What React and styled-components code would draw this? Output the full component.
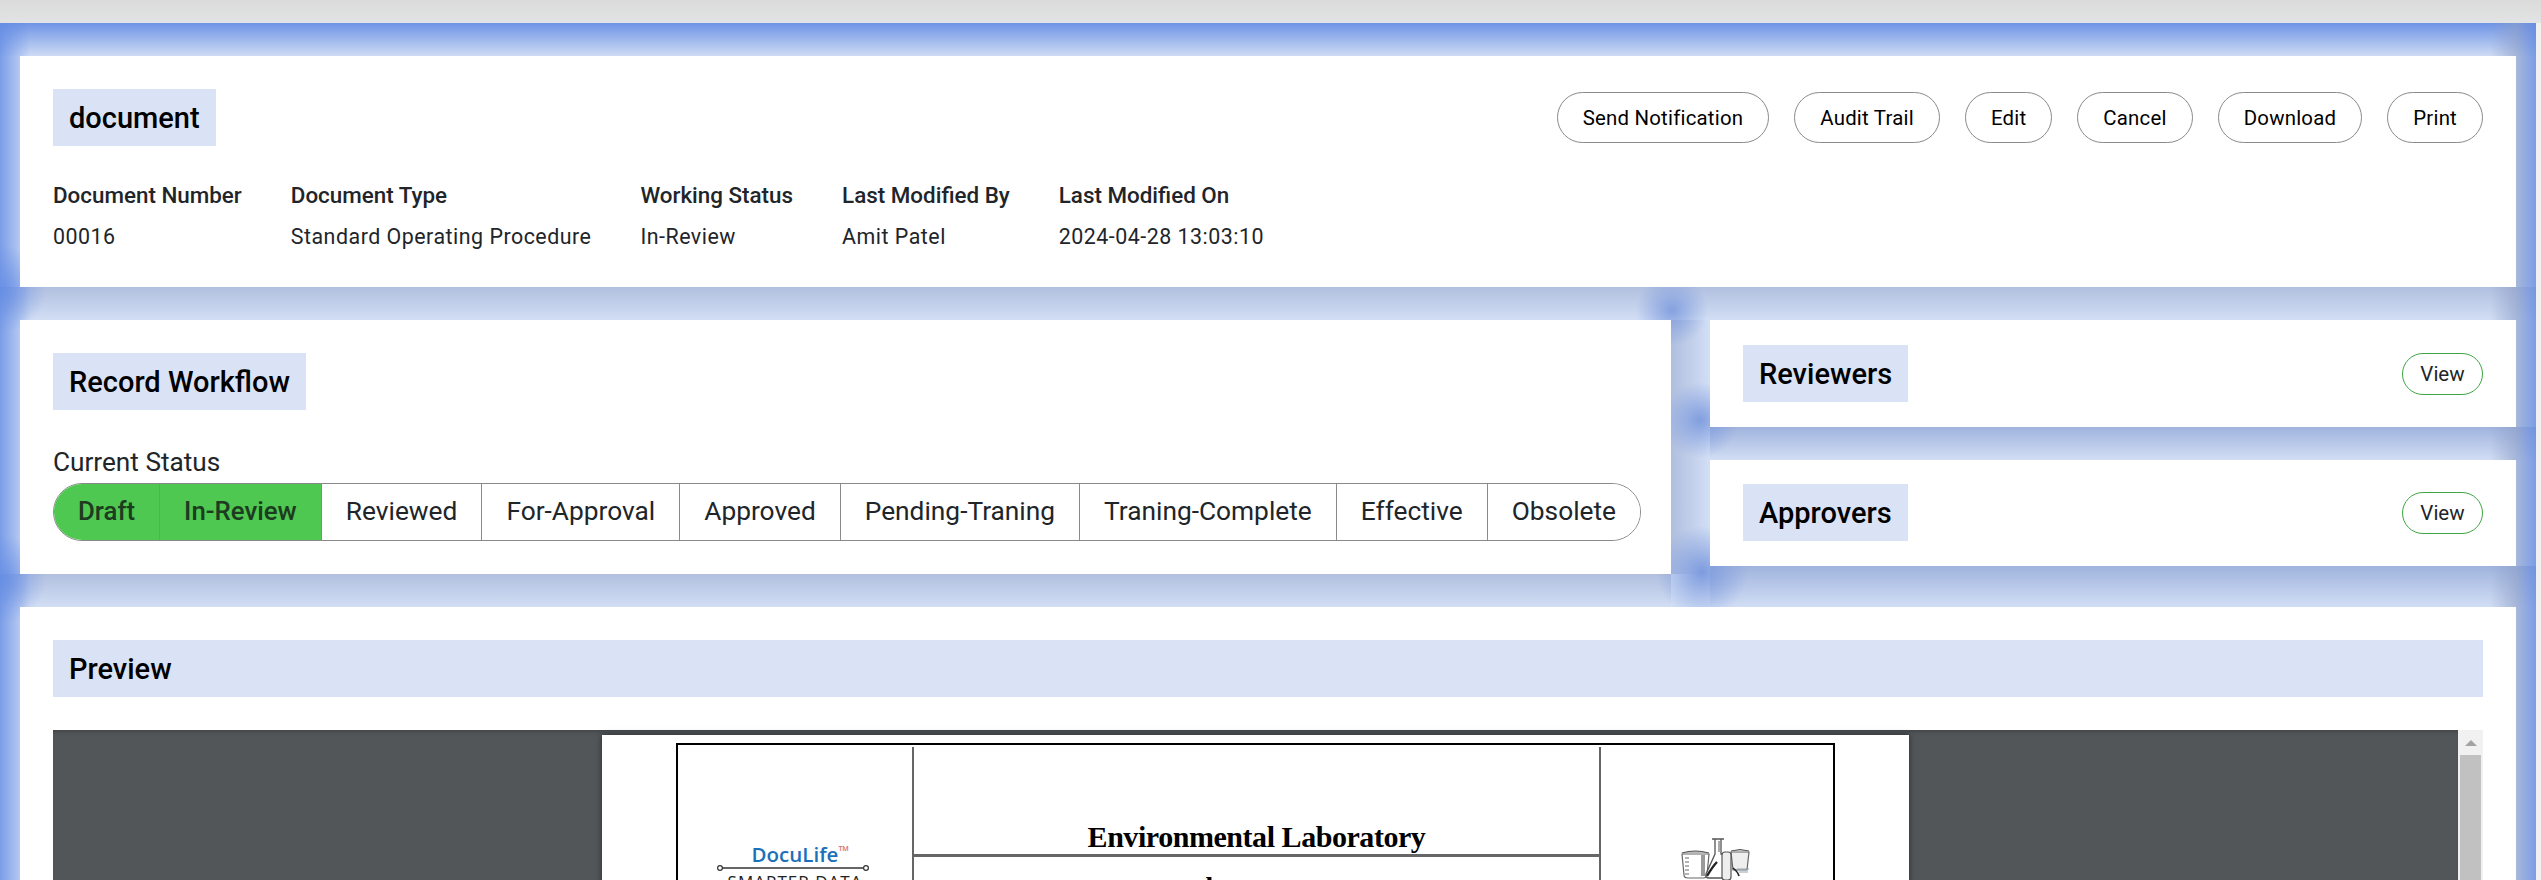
import React from 'react';
import styled, { createGlobalStyle } from 'styled-components';

const Global = createGlobalStyle`
  html, body { margin: 0; padding: 0; height: 880px; overflow: hidden; background: #f1f1f1; }
  #root { height: 880px; overflow: hidden; }
  * { box-sizing: border-box; }
`;

const Shell = styled.div`
  height: 880px;
  display: flex;
  flex-direction: column;
  overflow: hidden;
  font-family: Roboto, "Liberation Sans", sans-serif;
  color: #212529;
`;
const TopStrip = styled.div`
  height: 23px;
  flex: none;
  background: linear-gradient(180deg, #dbdbdb, #e2e3e4);
`;
const Body = styled.div`
  flex: 1;
  min-height: 0;
  display: flex;
`;
const Gutter = styled.div`
  width: 5px;
  flex: none;
  background: #f1f1f1;
`;
const Main = styled.main`
  flex: 1;
  min-width: 0;
  padding: 33px 20px 0;
  display: flex;
  flex-direction: column;
  gap: 33px;
  overflow: hidden;
  background-color: #d3dff5;
  background-repeat: no-repeat;
  background-image:
    radial-gradient(circle 36px at 1672px 287px, rgba(125, 155, 222, 0.9), rgba(125, 155, 222, 0)),
    radial-gradient(circle 38px at 1700px 397px, rgba(125, 155, 222, 0.95), rgba(125, 155, 222, 0)),
    radial-gradient(circle 46px at 1702px 549px, rgba(125, 155, 222, 1), rgba(125, 155, 222, 0)),
    radial-gradient(circle 44px at 2px 266px, rgba(100, 140, 228, 0.75), rgba(100, 140, 228, 0)),
    radial-gradient(circle 44px at 2px 556px, rgba(100, 140, 228, 0.75), rgba(100, 140, 228, 0)),
    linear-gradient(90deg, rgba(100, 140, 228, 0.8), rgba(100, 140, 228, 0) 30px),
    linear-gradient(90deg, rgba(140, 158, 200, 0), rgba(140, 158, 200, 0.6) 26px, rgba(100, 140, 228, 0.8) 46px),
    linear-gradient(180deg, rgba(140, 158, 200, 0.48), rgba(140, 158, 200, 0.02)),
    linear-gradient(180deg, rgba(140, 158, 200, 0.48), rgba(140, 158, 200, 0.02)),
    linear-gradient(180deg, rgba(125, 150, 205, 0.6), rgba(125, 150, 205, 0.02)),
    linear-gradient(180deg, rgba(125, 150, 205, 0.6), rgba(125, 150, 205, 0.02)),
    linear-gradient(90deg, rgba(140, 158, 200, 0.5), rgba(140, 158, 200, 0)),
    linear-gradient(180deg, rgba(100, 140, 228, 0.9), rgba(100, 140, 228, 0.05));
  background-size:
    auto, auto, auto, auto, auto,
    40px 100%,
    46px 100%,
    100% 33px,
    1671px 33px,
    826px 33px,
    826px 41px,
    39px 254px,
    100% 33px;
  background-position:
    0 0, 0 0, 0 0, 0 0, 0 0,
    0 0,
    2490px 0,
    0 264px,
    0 551px,
    1710px 404px,
    1710px 543px,
    1671px 297px,
    0 0;
`;
const Card = styled.section`
  background: #fff;
  flex: none;
  padding: ${p => p.$pad || '33px'};
`;
const HeaderRow = styled.div`
  display: flex;
  align-items: center;
  justify-content: space-between;
`;
const Chip = styled.h2`
  margin: 0;
  height: 57px;
  padding: 2px 16px 0;
  display: ${p => (p.$wide ? 'flex' : 'inline-flex')};
  align-items: center;
  background: #dae3f5;
  color: #000;
  font-size: 29px;
  font-weight: 500;
  line-height: 1;
`;
const Actions = styled.div`
  display: flex;
  gap: 25px;
`;
const PillButton = styled.button`
  height: 51px;
  padding: 0 25px;
  border: 1px solid #8a8a8a;
  border-radius: 26px;
  background: #fff;
  color: #000;
  font-family: inherit;
  font-size: 20.4px;
  letter-spacing: 0.22px;
`;
const Meta = styled.div`
  display: flex;
  gap: 49px;
  margin-top: 37px;
`;
const MetaCol = styled.div`
  display: flex;
  flex-direction: column;
  gap: 18px;
`;
const MetaLabel = styled.div`
  font-size: 22.4px;
  font-weight: 500;
  line-height: 24px;
`;
const MetaValue = styled.div`
  font-size: 21.4px;
  line-height: 24px;
  letter-spacing: 0.5px;
`;
const Split = styled.div`
  display: grid;
  grid-template-columns: 1651px 806px;
  gap: 39px;
  flex: none;
`;
const Stack = styled.div`
  display: flex;
  flex-direction: column;
  gap: 33px;
`;
const StatusLabel = styled.div`
  margin: 34px 0 3px;
  font-size: 26.2px;
  line-height: 36px;
`;
const StatusBar = styled.div`
  display: flex;
  width: max-content;
  height: 58px;
  border: 1.5px solid #8a8a8a;
  border-radius: 29px;
  overflow: hidden;
`;
const Step = styled.div`
  display: flex;
  align-items: center;
  padding: 0 24px 2px;
  font-size: ${p => (p.$active ? '25.8px' : '26.3px')};
  font-weight: ${p => (p.$active ? 500 : 400)};
  background: ${p => (p.$active ? '#4ec850' : '#fff')};
  color: ${p => (p.$active ? '#1d3b20' : '#212529')};
  & + & { border-left: 1px solid #8a8a8a; }
`;
const SideHeader = styled.div`
  display: flex;
  align-items: center;
  justify-content: space-between;
`;
const ViewButton = styled.button`
  height: 42px;
  width: 81px;
  border: 1px solid #3fa544;
  border-radius: 21px;
  background: #fff;
  color: #212529;
  font-family: inherit;
  font-size: 20.5px;
  padding: 0;
`;
const Viewer = styled.div`
  display: flex;
  margin-top: 33px;
  height: 800px;
  background: #525659;
`;
const PdfCanvas = styled.div`
  flex: 1;
  min-width: 0;
  padding: 5px 0 0 549px;
  box-shadow: inset 0 4px 4px -3px rgba(0, 0, 0, 0.25);
`;
const PdfPage = styled.div`
  width: 1307px;
  height: 1800px;
  padding: 8px 74px 0;
  background: #fff;
  box-shadow: 0 0 6px rgba(0, 0, 0, 0.5);
`;
const DocTable = styled.div`
  display: grid;
  grid-template-columns: 234px 689px 236px;
  border: 2px solid #000;
  padding-top: 2px;
  height: 500px;
  color: #000;
`;
const LogoCell = styled.div`
  padding-top: 98px;
  display: flex;
  flex-direction: column;
  align-items: center;
`;
const LogoName = styled.div`
  font-family: "Open Sans", sans-serif;
  font-size: 20.5px;
  font-weight: 600;
  line-height: 19px;
  color: #1a70b9;
  position: relative;
  & sup {
    position: absolute;
    top: 0;
    left: 100%;
    font-size: 7px;
    line-height: 1;
    color: #d96a6a;
  }
`;
const LogoRule = styled.svg`
  display: block;
  margin: -1px 0 0 -4px;
`;
const LogoTag = styled.div`
  margin-top: 0;
  font-family: "Open Sans", sans-serif;
  font-size: 17px;
  line-height: 18px;
  letter-spacing: 1px;
  color: #222;
  white-space: nowrap;
`;
const CenterCell = styled.div`
  border-left: 2px solid #666;
  border-right: 2px solid #666;
`;
const DocHeading = styled.div`
  height: 110px;
  display: flex;
  align-items: flex-end;
  justify-content: center;
  padding-bottom: 2px;
  border-bottom: 3px solid #666;
  font-family: "Liberation Serif", serif;
  font-size: 30px;
  font-weight: 700;
  line-height: 30px;
  letter-spacing: -0.45px;
`;
const DocTitle = styled.div`
  padding-top: 14px;
  text-align: center;
  font-family: "Liberation Serif", serif;
  font-size: 28px;
  font-weight: 700;
  line-height: 32px;
`;
const LabCell = styled.div`
  padding: 91px 0 0 0;
  display: flex;
  justify-content: center;
`;
const ScrollTrack = styled.div`
  width: 25px;
  flex: none;
  padding: 0 2px;
  display: flex;
  flex-direction: column;
  align-items: center;
  background: #f1f1f1;
`;
const ScrollArrow = styled.div`
  margin-top: 10px;
  width: 0;
  height: 0;
  border-left: 6px solid transparent;
  border-right: 6px solid transparent;
  border-bottom: 6px solid #a3a3a3;
`;
const ScrollThumb = styled.div`
  margin-top: 9px;
  width: 21px;
  flex: 1;
  background: #c1c1c1;
`;

const LabIcon = () => (
  <svg width="80" height="46" viewBox="0 0 80 46" style={{ filter: 'blur(0.4px)' }}>
    <path d="M3 16 L5 37 Q5 40 9 40 L24 40 Q28 40 28 37 L30 16 Z" fill="#fff" stroke="#666" strokeWidth="1.2" />
    <path d="M3 15 Q16 11 30 15" fill="#bbb" stroke="#555" strokeWidth="1.2" />
    <path d="M6 20 h4 M6 24 h4 M6 28 h4 M6 32 h4 M6 36 h4" stroke="#555" strokeWidth="0.9" />
    <path d="M24 17 V38" stroke="#999" strokeWidth="4" />
    <path d="M52 14 L54 32 L68 32 L70 14 Z" fill="#eee" stroke="#666" strokeWidth="1.2" />
    <path d="M52 13 Q61 10 70 13" fill="#ccc" stroke="#555" strokeWidth="1" />
    <path d="M33 1 H45 M36 1 V16 L27 36 Q26 40 30 40 H50 V16 L42 16 V1" fill="#fff" stroke="#555" strokeWidth="1.3" />
    <path d="M40 3 V14" stroke="#aaa" strokeWidth="2" />
    <path d="M28 38 Q34 28 38 24" fill="none" stroke="#222" strokeWidth="2.4" />
    <rect x="43" y="14" width="9" height="28" rx="3" fill="#eee" stroke="#555" strokeWidth="1.2" />
    <path d="M54 30 Q59 34 60 38" fill="none" stroke="#222" strokeWidth="1.6" />
    <path d="M58 31 h12 M60 34 h9" stroke="#8fa3b5" strokeWidth="1.2" />
    <path d="M2 45 h4 M10 44 h6 M20 45 h8 M36 44 h5 M46 45 h6 M60 44 h6" stroke="#8a9ab0" strokeWidth="1" />
  </svg>
);

const STEPS = ['Draft', 'In-Review', 'Reviewed', 'For-Approval', 'Approved', 'Pending-Traning', 'Traning-Complete', 'Effective', 'Obsolete'];
const ACTIONS = ['Send Notification', 'Audit Trail', 'Edit', 'Cancel', 'Download', 'Print'];
const META = [
  ['Document Number', '00016'],
  ['Document Type', 'Standard Operating Procedure'],
  ['Working Status', 'In-Review'],
  ['Last Modified By', 'Amit Patel'],
  ['Last Modified On', '2024-04-28 13:03:10'],
];

export default function App() {
  return (
    <Shell>
      <Global />
      <TopStrip />
      <Body>
        <Main>
          <Card $pad="33px 33px 38px">
            <HeaderRow>
              <Chip>document</Chip>
              <Actions>
                {ACTIONS.map(a => <PillButton key={a}>{a}</PillButton>)}
              </Actions>
            </HeaderRow>
            <Meta>
              {META.map(([label, value]) => (
                <MetaCol key={label}>
                  <MetaLabel>{label}</MetaLabel>
                  <MetaValue>{value}</MetaValue>
                </MetaCol>
              ))}
            </Meta>
          </Card>
          <Split>
            <Card>
              <Chip>Record Workflow</Chip>
              <StatusLabel>Current Status</StatusLabel>
              <StatusBar>
                {STEPS.map((s, i) => <Step key={s} $active={i < 2}>{s}</Step>)}
              </StatusBar>
            </Card>
            <Stack>
              <Card $pad="25px 33px">
                <SideHeader>
                  <Chip>Reviewers</Chip>
                  <ViewButton>View</ViewButton>
                </SideHeader>
              </Card>
              <Card $pad="24px 33px 25px">
                <SideHeader>
                  <Chip>Approvers</Chip>
                  <ViewButton>View</ViewButton>
                </SideHeader>
              </Card>
            </Stack>
          </Split>
          <Card>
            <Chip $wide>Preview</Chip>
            <Viewer>
              <PdfCanvas>
                <PdfPage>
                  <DocTable>
                    <LogoCell>
                      <LogoName>DocuLife<sup>TM</sup></LogoName>
                      <LogoRule width="154" height="10" viewBox="0 0 154 10">
                        <line x1="6" y1="5" x2="148" y2="5" stroke="#333" strokeWidth="1.6" />
                        <circle cx="4" cy="5" r="2.4" fill="#fff" stroke="#333" strokeWidth="1.2" />
                        <circle cx="150" cy="5" r="2.4" fill="#fff" stroke="#333" strokeWidth="1.2" />
                      </LogoRule>
                      <LogoTag>SMARTER DATA</LogoTag>
                    </LogoCell>
                    <CenterCell>
                      <DocHeading>Environmental Laboratory</DocHeading>
                      <DocTitle>document</DocTitle>
                    </CenterCell>
                    <LabCell>
                      <LabIcon />
                    </LabCell>
                  </DocTable>
                </PdfPage>
              </PdfCanvas>
              <ScrollTrack>
                <ScrollArrow />
                <ScrollThumb />
              </ScrollTrack>
            </Viewer>
          </Card>
        </Main>
        <Gutter />
      </Body>
    </Shell>
  );
}
